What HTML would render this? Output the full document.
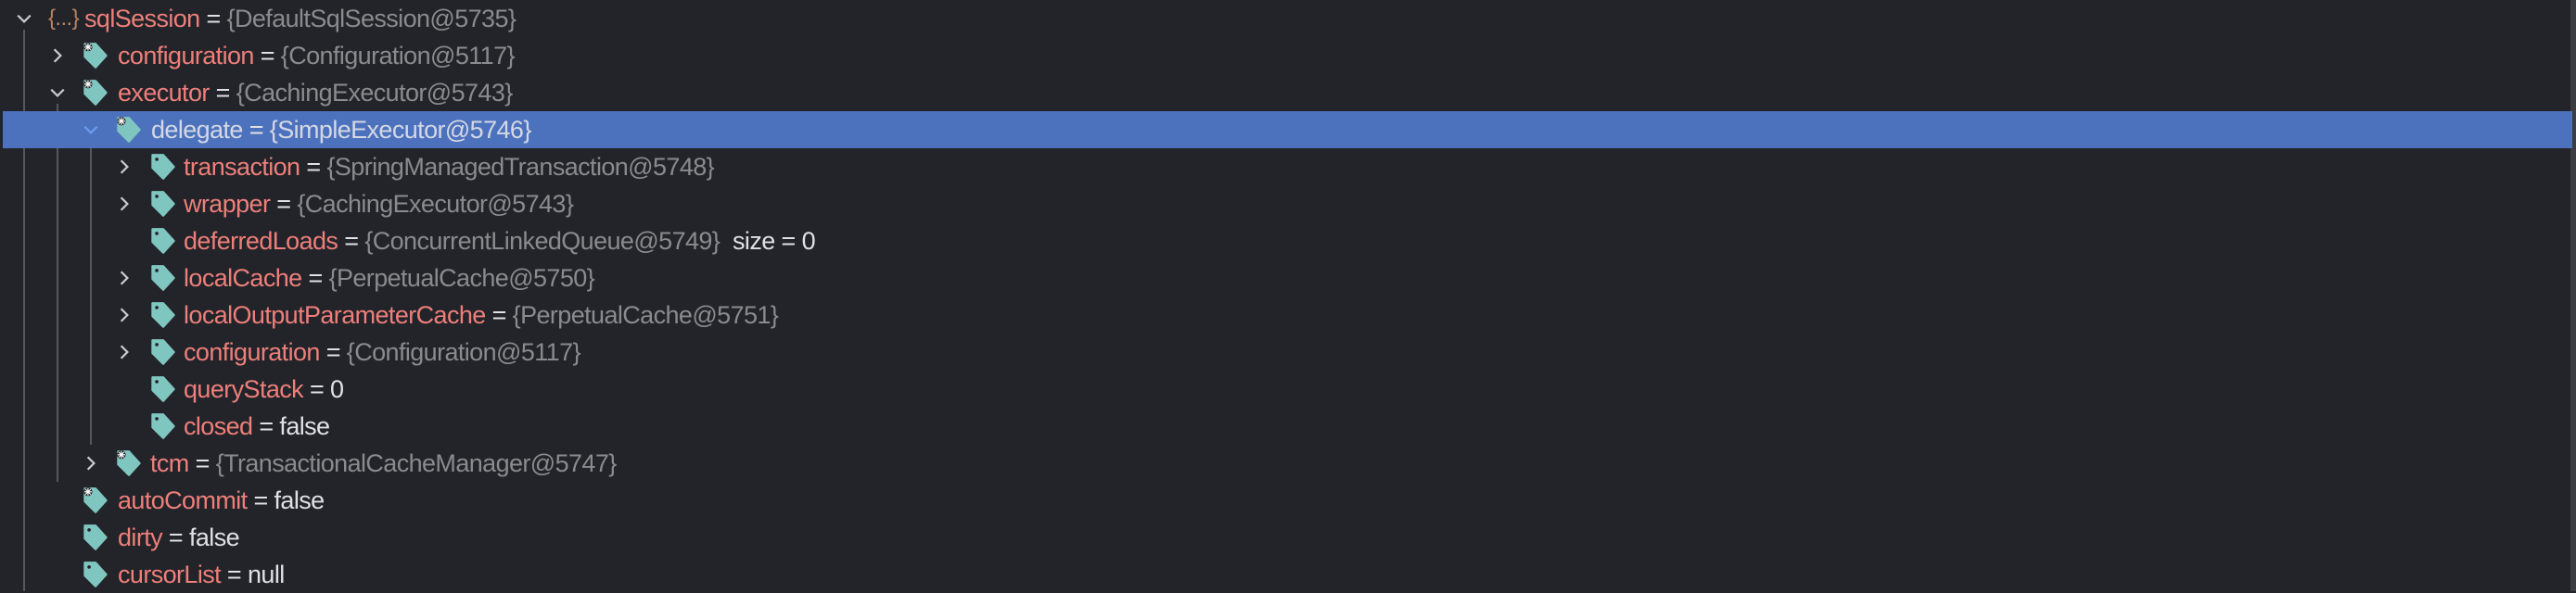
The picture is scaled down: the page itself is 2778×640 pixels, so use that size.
<!DOCTYPE html>
<html><head><meta charset="utf-8"><style>
body{margin:0;width:2778px;height:638px;background:#222429;overflow:hidden;position:relative;font-family:"Liberation Sans",sans-serif;}
.row{position:absolute;left:0;height:40px;width:2772px;}
.sel{background:#4d72bd;left:3px;width:2771px;}
.t{position:absolute;top:0;line-height:40px;font-size:27px;letter-spacing:-0.6px;white-space:nowrap;color:#dfe1e5;}
.n{color:#ee7f7b}.g{color:#8a8b8e}
.sel .n,.sel .g{color:#d3d8e4}
.vl{position:absolute;width:2px;background:#55575c;}
.chev{position:absolute;top:11px;width:18px;height:18px;}
.tag{position:absolute;top:5px;width:28px;height:30px;}
</style></head><body>
<div style="position:absolute;right:0;top:0;width:6px;height:638px;background:#3b3d41"></div>
<div class="vl" style="left:25px;top:32px;height:606px"></div>
<div class="vl" style="left:61px;top:112px;height:408px"></div>
<div class="vl" style="left:97px;top:152px;height:328px"></div>
<svg width="0" height="0" style="position:absolute">
<defs>
<symbol id="tg" viewBox="0 0 24 26"><path d="M2 2 H12 L22 13 L12 24 L2 14 Z" fill="#80c6c0" stroke="#80c6c0" stroke-width="2" stroke-linejoin="round"/><circle cx="6" cy="6" r="1.6" fill="#222429"/></symbol>
<symbol id="tgs" viewBox="0 0 24 26"><path d="M2 2 H12 L22 13 L12 24 L2 14 Z" fill="#80c6c0" stroke="#80c6c0" stroke-width="2" stroke-linejoin="round"/><circle cx="5" cy="5" r="4" fill="#222429"/><path d="M5 1.5V8.5M1.5 5H8.5M2.5 2.5L7.5 7.5M7.5 2.5L2.5 7.5" stroke="#fff" stroke-width="1"/></symbol>
<symbol id="cr" viewBox="0 0 16 16"><path d="M5 2 L11 8 L5 14" fill="none" stroke="#c9cbcf" stroke-width="2"/></symbol>
<symbol id="cd" viewBox="0 0 16 16"><path d="M2 5 L8 11 L14 5" fill="none" stroke="#c9cbcf" stroke-width="2"/></symbol>
</defs></svg>

<div class="row" style="top:0">
<svg class="chev" style="left:17px"><use href="#cd"/></svg>
<div class="t" style="left:52px;color:#b9835f;font-size:24px">{...}</div>
<div class="t" style="left:91px"><span class="n">sqlSession</span> = <span class="g">{DefaultSqlSession@5735}</span></div></div>

<div class="row" style="top:40px">
<svg class="chev" style="left:53px"><use href="#cr"/></svg>
<svg class="tag" style="left:89px"><use href="#tgs"/></svg>
<div class="t" style="left:127px"><span class="n">configuration</span> = <span class="g">{Configuration@5117}</span></div></div>

<div class="row" style="top:80px">
<svg class="chev" style="left:53px"><use href="#cd"/></svg>
<svg class="tag" style="left:89px"><use href="#tgs"/></svg>
<div class="t" style="left:127px"><span class="n">executor</span> = <span class="g">{CachingExecutor@5743}</span></div></div>

<div class="row sel" style="top:120px">
<svg class="chev" style="left:86px"><path d="M2 5 L8 11 L14 5" fill="none" stroke="#6a9bf2" stroke-width="2" transform="scale(1.125)"/></svg>
<svg class="tag" style="left:122px"><use href="#tgs"/></svg>
<div class="t" style="left:160px"><span class="n">delegate</span> = <span class="g">{SimpleExecutor@5746}</span></div></div>

<div class="row" style="top:160px">
<svg class="chev" style="left:125px"><use href="#cr"/></svg>
<svg class="tag" style="left:162px"><use href="#tg"/></svg>
<div class="t" style="left:198px"><span class="n">transaction</span> = <span class="g">{SpringManagedTransaction@5748}</span></div></div>

<div class="row" style="top:200px">
<svg class="chev" style="left:125px"><use href="#cr"/></svg>
<svg class="tag" style="left:162px"><use href="#tg"/></svg>
<div class="t" style="left:198px"><span class="n">wrapper</span> = <span class="g">{CachingExecutor@5743}</span></div></div>

<div class="row" style="top:240px">
<svg class="tag" style="left:162px"><use href="#tg"/></svg>
<div class="t" style="left:198px"><span class="n">deferredLoads</span> = <span class="g">{ConcurrentLinkedQueue@5749}</span>&nbsp; size = 0</div></div>

<div class="row" style="top:280px">
<svg class="chev" style="left:125px"><use href="#cr"/></svg>
<svg class="tag" style="left:162px"><use href="#tg"/></svg>
<div class="t" style="left:198px"><span class="n">localCache</span> = <span class="g">{PerpetualCache@5750}</span></div></div>

<div class="row" style="top:320px">
<svg class="chev" style="left:125px"><use href="#cr"/></svg>
<svg class="tag" style="left:162px"><use href="#tg"/></svg>
<div class="t" style="left:198px"><span class="n">localOutputParameterCache</span> = <span class="g">{PerpetualCache@5751}</span></div></div>

<div class="row" style="top:360px">
<svg class="chev" style="left:125px"><use href="#cr"/></svg>
<svg class="tag" style="left:162px"><use href="#tg"/></svg>
<div class="t" style="left:198px"><span class="n">configuration</span> = <span class="g">{Configuration@5117}</span></div></div>

<div class="row" style="top:400px">
<svg class="tag" style="left:162px"><use href="#tg"/></svg>
<div class="t" style="left:198px"><span class="n">queryStack</span> = 0</div></div>

<div class="row" style="top:440px">
<svg class="tag" style="left:162px"><use href="#tg"/></svg>
<div class="t" style="left:198px"><span class="n">closed</span> = false</div></div>

<div class="row" style="top:480px">
<svg class="chev" style="left:89px"><use href="#cr"/></svg>
<svg class="tag" style="left:125px"><use href="#tgs"/></svg>
<div class="t" style="left:162px"><span class="n">tcm</span> = <span class="g">{TransactionalCacheManager@5747}</span></div></div>

<div class="row" style="top:520px">
<svg class="tag" style="left:89px"><use href="#tgs"/></svg>
<div class="t" style="left:127px"><span class="n">autoCommit</span> = false</div></div>

<div class="row" style="top:560px">
<svg class="tag" style="left:89px"><use href="#tg"/></svg>
<div class="t" style="left:127px"><span class="n">dirty</span> = false</div></div>

<div class="row" style="top:600px">
<svg class="tag" style="left:89px"><use href="#tg"/></svg>
<div class="t" style="left:127px"><span class="n">cursorList</span> = null</div></div>
</body></html>
